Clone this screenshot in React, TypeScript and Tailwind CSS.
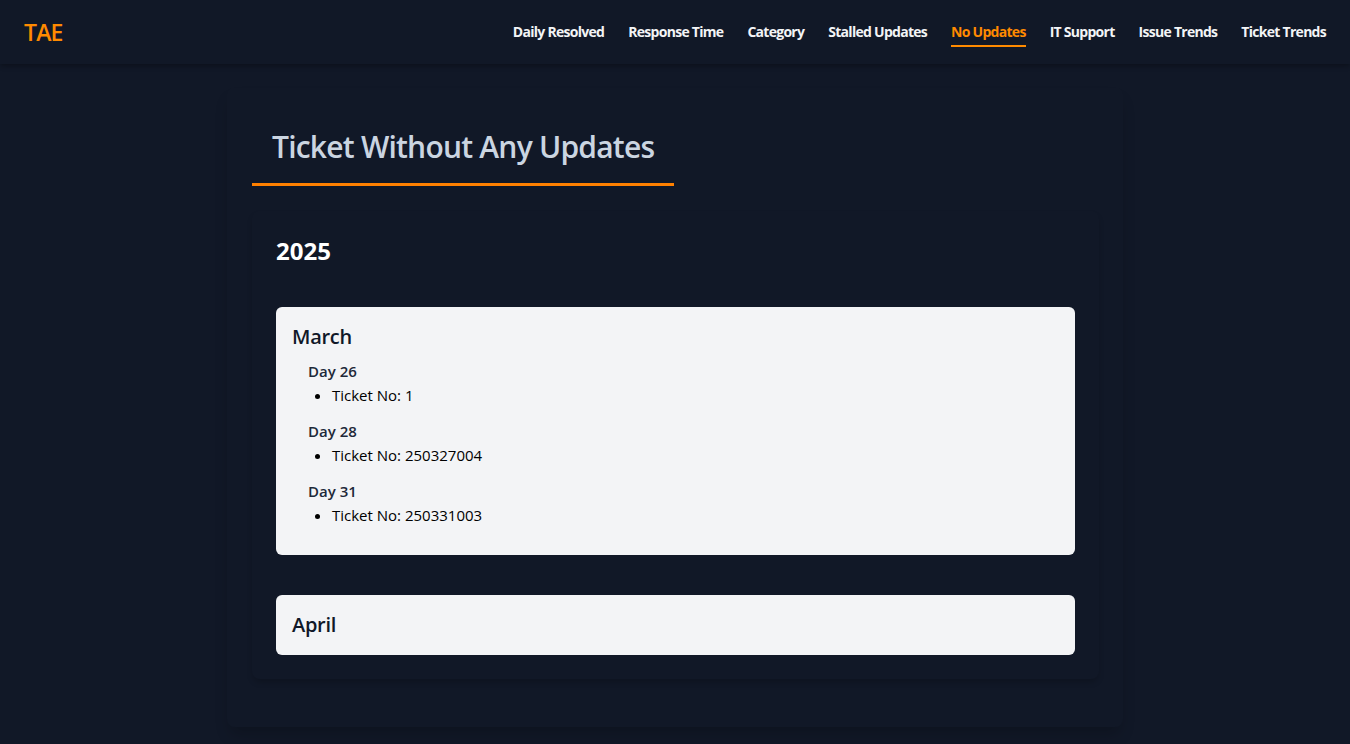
import React from 'react';

const NAV_ITEMS = [
    'Daily Resolved',
    'Response Time',
    'Category',
    'Stalled Updates',
    'No Updates',
    'IT Support',
    'Issue Trends',
    'Ticket Trends',
];

interface DayGroup {
    day: number;
    tickets: string[];
}

interface MonthGroup {
    month: string;
    days: DayGroup[];
}

const DATA: MonthGroup[] = [
    {
        month: 'March',
        days: [
            { day: 26, tickets: ['1'] },
            { day: 28, tickets: ['250327004'] },
            { day: 31, tickets: ['250331003'] },
        ],
    },
    { month: 'April', days: [] },
];

export default function App() {
    return (
        <div className="min-h-[744px] bg-[#111827] font-['Open_Sans',sans-serif]">
            <header className="h-16 flex items-center justify-between px-6 bg-[#111827] shadow-[0_2px_5px_rgba(0,0,0,0.3)]">
                <div className="text-[23px] font-semibold text-[#ff8a00] tracking-[-0.8px]">TAE</div>
                <nav className="flex items-center gap-6 -mt-[1px]">
                    {NAV_ITEMS.map((item) => {
                        const active = item === 'No Updates';
                        return (
                            <a
                                key={item}
                                className={`relative text-[14px] font-bold tracking-[-0.72px] ${active ? 'text-[#ff8a00]' : 'text-gray-100'}`}
                            >
                                {item}
                                {active && (
                                    <span className="absolute left-0 right-0 -bottom-[5px] h-[2px] bg-[#ff8a00]"></span>
                                )}
                            </a>
                        );
                    })}
                </nav>
            </header>

            <main className="max-w-4xl mx-auto mt-6 pt-6 pl-[25px] pr-6 pb-12 rounded-lg shadow-[0_10px_15px_-3px_rgba(0,0,0,0.2)]">
                <h1 className="inline-block px-5 pt-[17px] pb-[18px] text-[30px] leading-9 font-semibold text-[#cbd5e1] border-b-[3px] border-[#ff8000] tracking-[-0.78px]">
                    Ticket Without Any Updates
                </h1>

                <section className="mt-[25px] p-6 rounded-lg shadow-[0_4px_6px_-1px_rgba(0,0,0,0.2)]">
                    <h2 className="text-[24px] leading-8 font-bold text-white mb-10">2025</h2>
                    <div className="flex flex-col gap-10">
                        {DATA.map((m) => (
                            <div key={m.month} className="bg-gray-100 rounded-md p-4">
                                <h3 className="text-[20px] leading-7 font-semibold text-gray-900 tracking-[-0.3px]">{m.month}</h3>
                                {m.days.length > 0 && (
                                    <div className="mt-2 ml-4">
                                        {m.days.map((d) => (
                                            <div key={d.day} className="mb-3">
                                                <h4 className="text-[15px] leading-6 font-semibold text-gray-800">Day {d.day}</h4>
                                                <ul className="list-disc pl-6 text-[15px] leading-6 text-black">
                                                    {d.tickets.map((t) => (
                                                        <li key={t}>Ticket No: {t}</li>
                                                    ))}
                                                </ul>
                                            </div>
                                        ))}
                                    </div>
                                )}
                            </div>
                        ))}
                    </div>
                </section>
            </main>
        </div>
    );
}
